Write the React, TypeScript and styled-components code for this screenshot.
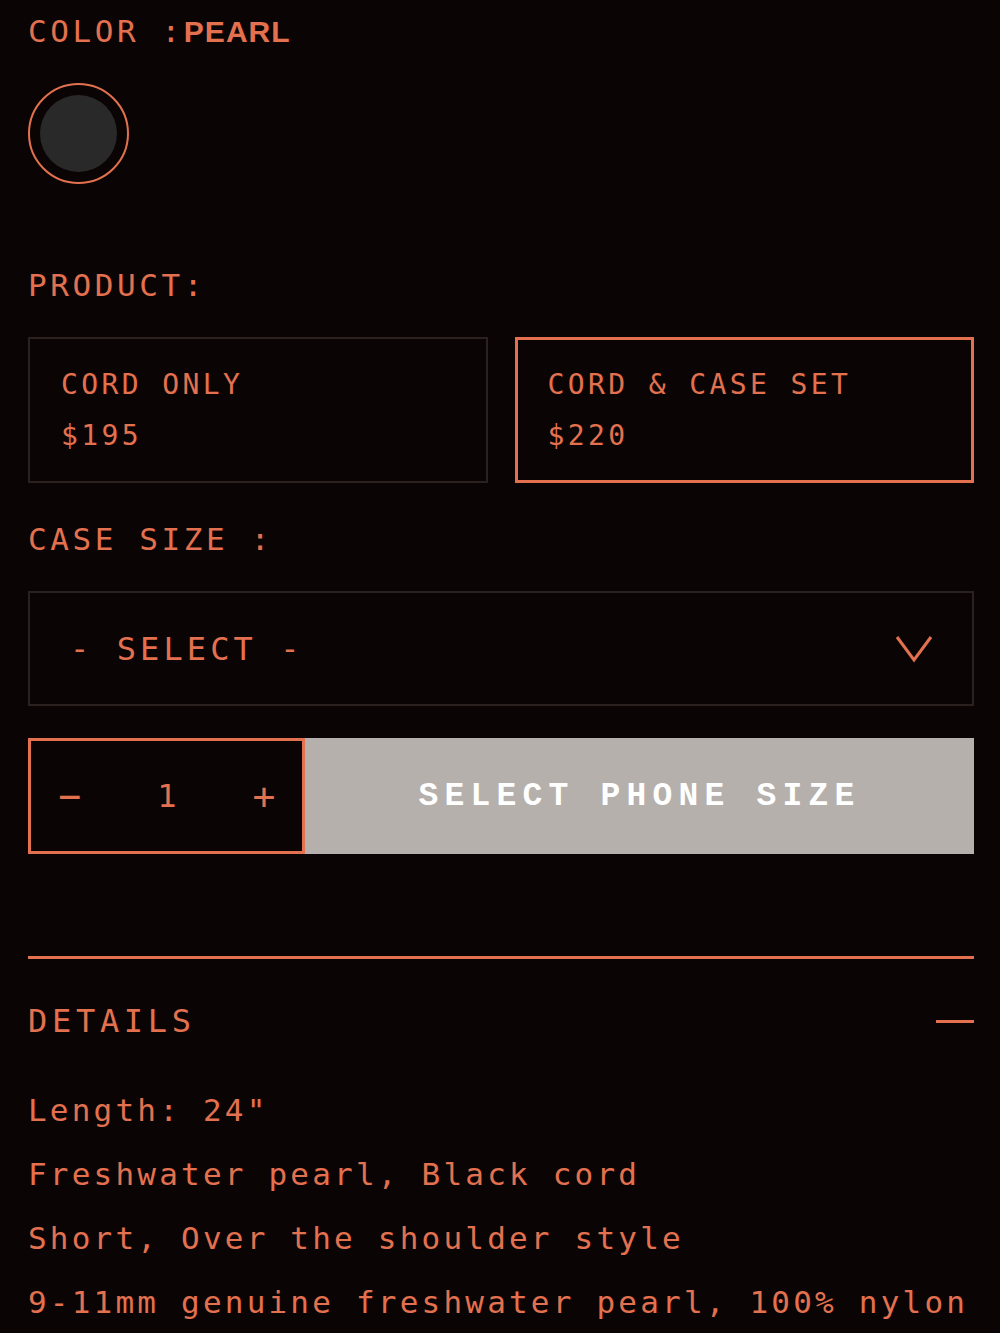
import React, { FunctionComponent, useState } from "react"
import styled, { createGlobalStyle } from "styled-components"

const ORANGE = "#e3714f"
const BG = "#0a0504"
const MONO = `"DejaVu Sans Mono", "Liberation Mono", monospace`

const GlobalStyle = createGlobalStyle`
  html, body {
    margin: 0;
    padding: 0;
    background: ${BG};
  }
  body {
    font-family: ${MONO};
    color: ${ORANGE};
  }
`

interface ProductOption {
  id: string
  name: string
  price: string
}

const PRODUCTS: ProductOption[] = [
  { id: "cord", name: "CORD ONLY", price: "$195" },
  { id: "set", name: "CORD & CASE SET", price: "$220" },
]

const DETAILS = [
  'Length: 24"',
  "Freshwater pearl, Black cord",
  "Short, Over the shoulder style",
  "9-11mm genuine freshwater pearl, 100% nylon",
]

const App: FunctionComponent = () => {
  const [selected, setSelected] = useState("set")
  const [qty, setQty] = useState(1)

  return (
    <>
      <GlobalStyle />
      <Page>
        <Label>
          COLOR :<ColorName>PEARL</ColorName>
        </Label>
        <Swatch>
          <SwatchFill />
        </Swatch>

        <Label $top={81}>PRODUCT:</Label>
        <Cards>
          {PRODUCTS.map((product) => (
            <Card
              key={product.id}
              $active={product.id === selected}
              onClick={() => setSelected(product.id)}
            >
              <CardText>{product.name}</CardText>
              <CardText>{product.price}</CardText>
            </Card>
          ))}
        </Cards>

        <Label $top={36}>CASE SIZE :</Label>
        <SelectBox>
          <SelectText>- SELECT -</SelectText>
          <svg width="38" height="28" viewBox="0 0 38 28" fill="none">
            <path
              d="M2 2 L19 25 L36 2"
              stroke={ORANGE}
              strokeWidth="3"
              strokeLinejoin="miter"
            />
          </svg>
        </SelectBox>

        <BuyRow>
          <Quantity>
            <QtyButton onClick={() => setQty(Math.max(1, qty - 1))}>−</QtyButton>
            <QtyValue>{qty}</QtyValue>
            <QtyButton onClick={() => setQty(qty + 1)}>+</QtyButton>
          </Quantity>
          <AddButton>SELECT PHONE SIZE</AddButton>
        </BuyRow>

        <Divider />

        <DetailsHeader>
          <DetailsTitle>DETAILS</DetailsTitle>
          <Collapse />
        </DetailsHeader>
        <DetailsList>
          {DETAILS.map((line) => (
            <DetailLine key={line}>{line}</DetailLine>
          ))}
        </DetailsList>
      </Page>
    </>
  )
}

export default App

const Page = styled.div`
  display: flex;
  flex-direction: column;
  padding: 11px 26px 40px 28px;
  min-height: 1333px;
  box-sizing: border-box;
  border-left: 2px solid #2a2624;
  margin-left: -2px;
`

const Label = styled.div<{ $top?: number }>`
  margin-top: ${(p) => p.$top ?? 0}px;
  font-family: ${MONO};
  font-size: 31px;
  letter-spacing: 3.6px;
  line-height: 40px;
  height: 40px;
  white-space: pre;
`

const ColorName = styled.span`
  font-family: "Liberation Sans", Arial, sans-serif;
  font-weight: 700;
  font-size: 30px;
  letter-spacing: 1px;
`

const Swatch = styled.div`
  margin-top: 32px;
  width: 101px;
  height: 101px;
  box-sizing: border-box;
  border: 2px solid ${ORANGE};
  border-radius: 50%;
  display: flex;
  align-items: center;
  justify-content: center;
`

const SwatchFill = styled.div`
  width: 77px;
  height: 77px;
  border-radius: 50%;
  background: #2a2929;
`

const Cards = styled.div`
  margin-top: 32px;
  display: grid;
  grid-template-columns: 1fr 1fr;
  gap: 27px;
`

const Card = styled.div<{ $active: boolean }>`
  height: 146px;
  box-sizing: border-box;
  border: ${(p) => (p.$active ? `3px solid ${ORANGE}` : "2px solid #2b211e")};
  padding-left: ${(p) => (p.$active ? 30 : 31)}px;
  display: flex;
  flex-direction: column;
  justify-content: center;
  cursor: pointer;
`

const CardText = styled.div`
  font-size: 28px;
  letter-spacing: 3.4px;
  line-height: 51px;
  white-space: pre;
`

const SelectBox = styled.div`
  margin-top: 32px;
  height: 115px;
  box-sizing: border-box;
  border: 2px solid #2b211e;
  padding: 0 39px 0 40px;
  display: flex;
  align-items: center;
  justify-content: space-between;
`

const SelectText = styled.div`
  font-size: 32px;
  letter-spacing: 4.1px;
  line-height: 40px;
  white-space: pre;
`

const BuyRow = styled.div`
  margin-top: 32px;
  height: 116px;
  display: flex;
`

const Quantity = styled.div`
  width: 277px;
  flex-shrink: 0;
  box-sizing: border-box;
  border: 3px solid ${ORANGE};
  display: flex;
  align-items: center;
  justify-content: space-between;
  padding: 0 25px 0 26px;
`

const QtyButton = styled.button`
  background: none;
  border: none;
  padding: 0;
  color: ${ORANGE};
  font-family: ${MONO};
  font-size: 38px;
  line-height: 40px;
  width: 26px;
  cursor: pointer;
`

const QtyValue = styled.div`
  font-size: 32px;
  line-height: 40px;
`

const AddButton = styled.button`
  flex: 1;
  border: none;
  background: #b5b0ac;
  color: #ffffff;
  font-family: "Courier New", "Liberation Mono", monospace;
  font-weight: 700;
  font-size: 33px;
  letter-spacing: 6.2px;
  cursor: pointer;
  padding: 0;
`

const Divider = styled.div`
  margin-top: 102px;
  height: 3px;
  background: ${ORANGE};
`

const DetailsHeader = styled.div`
  margin-top: 42px;
  height: 40px;
  display: flex;
  align-items: center;
  justify-content: space-between;
`

const DetailsTitle = styled.div`
  font-size: 32px;
  letter-spacing: 4.7px;
  line-height: 40px;
`

const Collapse = styled.div`
  width: 38px;
  height: 3px;
  background: ${ORANGE};
`

const DetailsList = styled.div`
  margin-top: 37px;
  display: flex;
  flex-direction: column;
`

const DetailLine = styled.div`
  font-size: 31px;
  letter-spacing: 3.2px;
  line-height: 64px;
  white-space: pre;
`
